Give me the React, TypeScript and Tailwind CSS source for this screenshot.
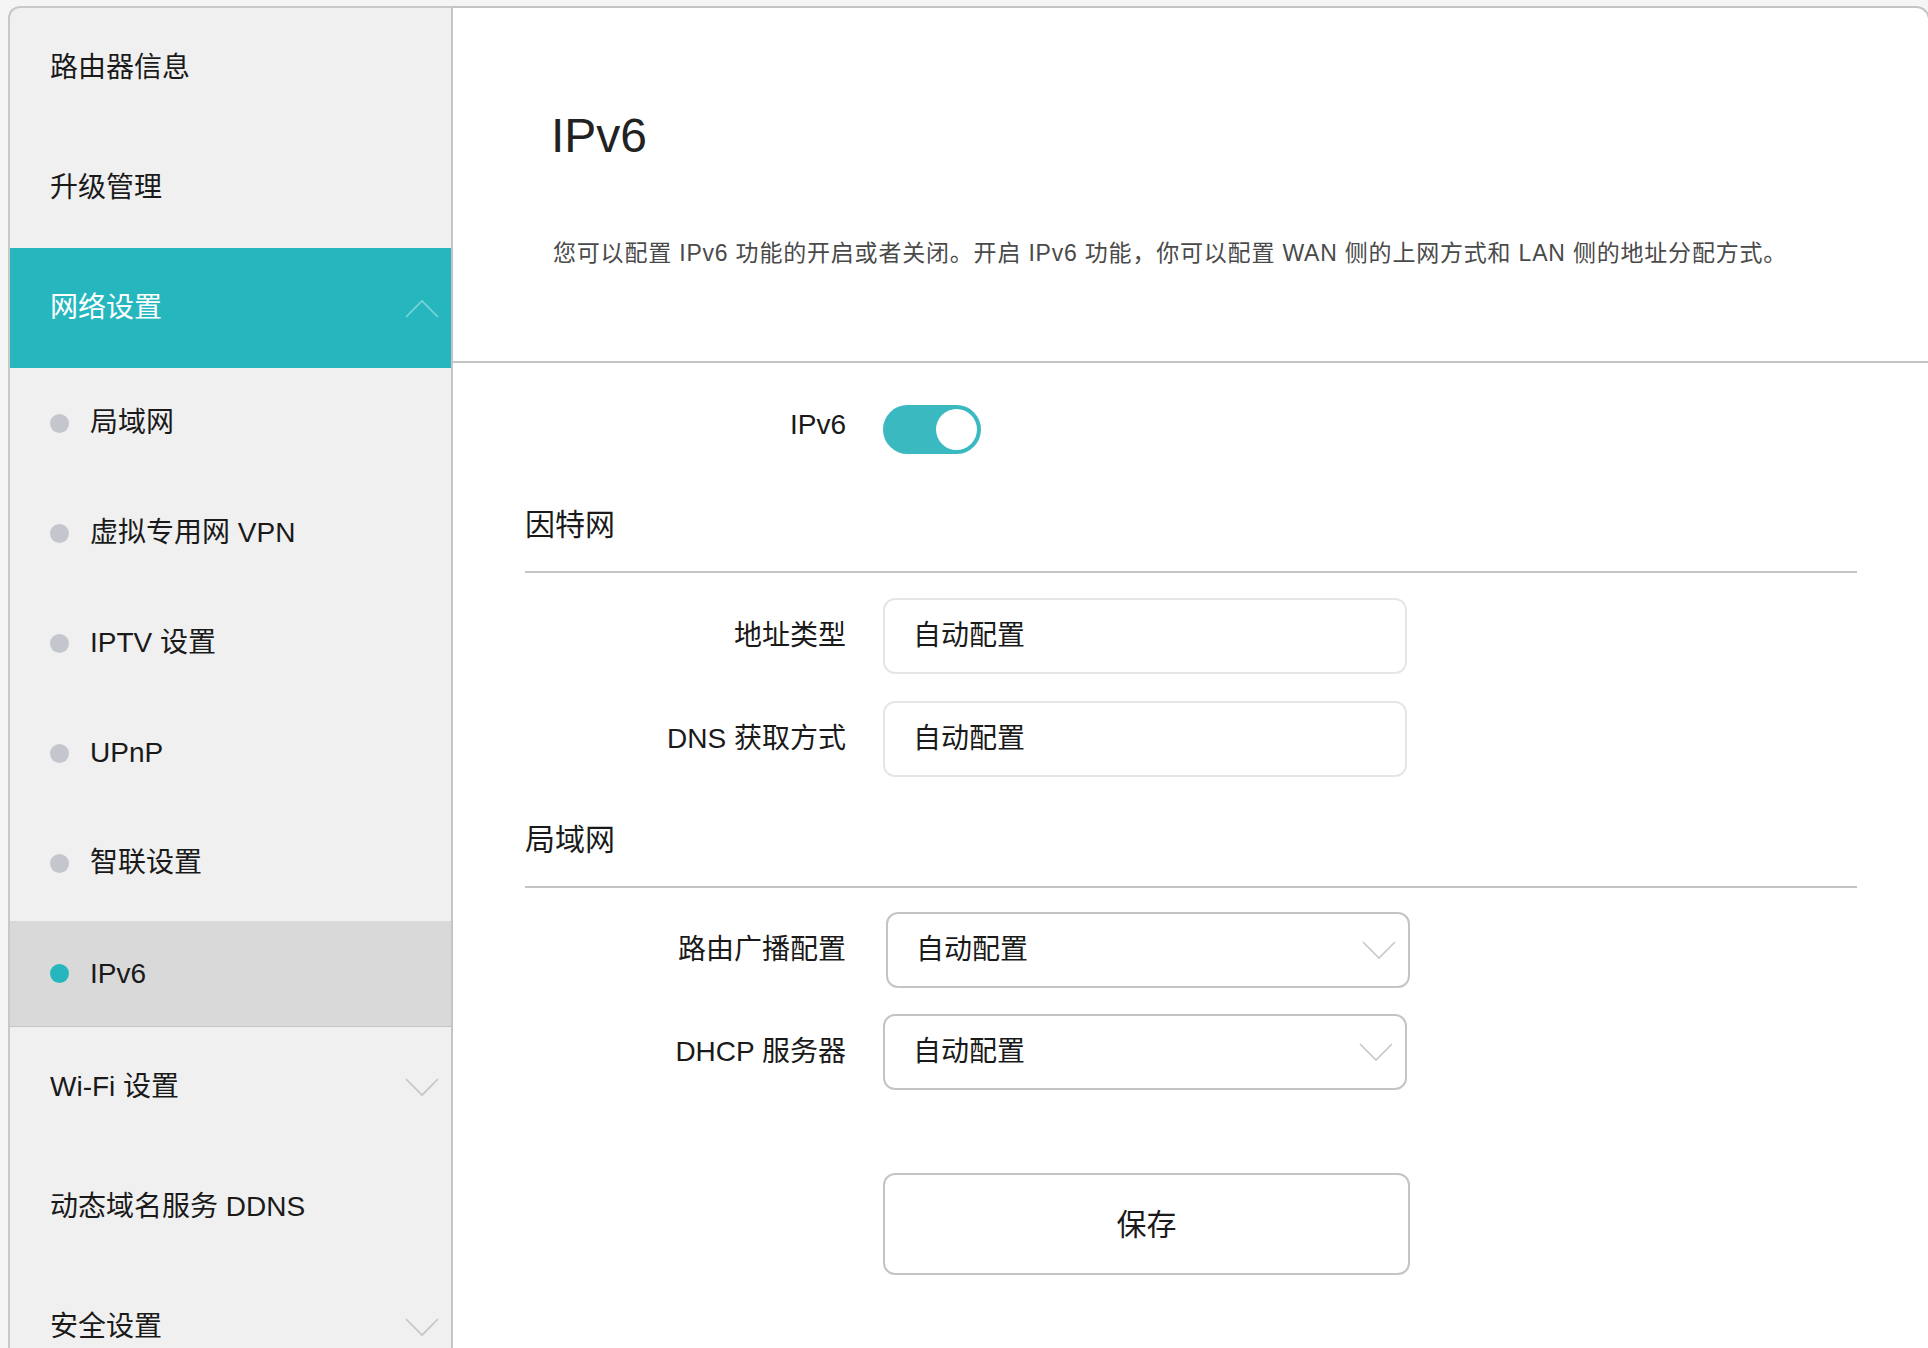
const topItems = ["路由器信息", "升级管理"];
const subItems = ["局域网", "虚拟专用网 VPN", "IPTV 设置", "UPnP", "智联设置", "IPv6"];

function Chevron({ up = false, className = "" }: { up?: boolean; className?: string }) {
  return (
    <svg width="34" height="19" viewBox="0 0 34 19" className={className} fill="none">
      <polyline
        points={up ? "1,18 17,2 33,18" : "1,1 17,17 33,1"}
        stroke="currentColor"
        strokeWidth="1.6"
      />
    </svg>
  );
}

function Sidebar() {
  return (
    <aside className="w-[443px] shrink-0 bg-[#f0f0f0] border-l-2 border-t-2 border-[#c8c8c8] rounded-tl-[12px] overflow-hidden">
      {topItems.map((item) => (
        <div key={item} className="h-[120px] flex items-center pl-[40px] text-[28px] text-[#1a1a1a]">
          {item}
        </div>
      ))}

      {/* 网络设置 */}
      <div className="h-[120px] flex items-center justify-between pl-[40px] pr-[12px] bg-[#26b7be] text-white text-[28px]">
        <span>网络设置</span>
        <Chevron up className="text-white/40" />
      </div>

      {subItems.map((item) => {
        const active = item === "IPv6";
        return (
          <div
            key={item}
            className={
              active
                ? "h-[106px] mt-[3px] flex items-center pl-[40px] bg-[#d9d9d9] border-b border-[#c4c4c4] text-[28px] text-[#1a1a1a]"
                : "h-[110px] flex items-center pl-[40px] text-[28px] text-[#1a1a1a]"
            }
          >
            <span
              className={
                active
                  ? "w-[19px] h-[19px] rounded-full bg-[#26b7be]"
                  : "w-[19px] h-[19px] rounded-full bg-[#c3c6cc]"
              }
            />
            <span className="ml-[21px]">{item}</span>
          </div>
        );
      })}

      <div className="h-[120px] flex items-center justify-between pl-[40px] pr-[12px] text-[28px] text-[#1a1a1a]">
        <span>Wi-Fi 设置</span>
        <Chevron className="text-[#c4c4c4]" />
      </div>
      <div className="h-[120px] flex items-center pl-[40px] text-[28px] text-[#1a1a1a]">
        动态域名服务 DDNS
      </div>
      <div className="h-[120px] flex items-center justify-between pl-[40px] pr-[12px] text-[28px] text-[#1a1a1a]">
        <span>安全设置</span>
        <Chevron className="text-[#c4c4c4]" />
      </div>
    </aside>
  );
}

function Row({
  label,
  children,
  className = "",
  labelClass = "",
}: {
  label: string;
  children: React.ReactNode;
  className?: string;
  labelClass?: string;
}) {
  return (
    <div className={`flex items-center ${className}`}>
      <div className={`w-[321px] text-right text-[28px] text-[#1a1a1a] ${labelClass}`}>{label}</div>
      <div className="ml-[37px]">{children}</div>
    </div>
  );
}

function Field({ value }: { value: string }) {
  return (
    <div className="w-[524px] h-[76px] flex items-center pl-[28px] border-2 border-[#e6e6e6] rounded-[12px] text-[28px] text-[#1a1a1a]">
      {value}
    </div>
  );
}

function SelectBox({ value, className = "" }: { value: string; className?: string }) {
  return (
    <div className={`w-[524px] h-[76px] flex items-center justify-between pl-[28px] pr-[12px] border-2 border-[#c4c4c4] rounded-[12px] text-[28px] text-[#1a1a1a] ${className}`}>
      <span>{value}</span>
      <Chevron className="text-[#c8c8c8]" />
    </div>
  );
}

export default function App() {
  return (
    <div className="h-[1348px] overflow-hidden bg-[#f5f5f5] pt-[6px] pl-[8px] flex font-['Liberation_Sans','Noto_Sans_CJK_SC',sans-serif]">
      <Sidebar />

      <main className="flex-1 -mr-[2px] bg-white border-t-2 border-l-2 border-r-2 border-[#c4c4c4] rounded-tr-[14px]">
        {/* HEADER */}
        <header className="h-[355px] border-b-2 border-[#c4c4c4] pl-[100px]">
          <h1 className="pt-[104px] -ml-[2px] text-[48px] leading-[48px] text-[#222]">IPv6</h1>
          <p className="mt-[77px] text-[23px] leading-[33px] tracking-[0.8px] text-[#4a4a4a]">
            您可以配置 IPv6 功能的开启或者关闭。开启 IPv6 功能，你可以配置 WAN 侧的上网方式和 LAN 侧的地址分配方式。
          </p>
        </header>

        {/* FORM */}
        <div className="pl-[72px] pr-[71px]">
          <Row label="IPv6" className="mt-[41px]" labelClass="pb-[8px]">
            <div className="w-[98px] h-[49px] rounded-full bg-[#3bb9c0] flex items-center justify-end pr-[4px]">
              <div className="w-[41px] h-[41px] rounded-full bg-white" />
            </div>
          </Row>

          <h2 className="mt-[51px] pb-[26px] border-b-2 border-[#c4c4c4] text-[30px] leading-[40px] text-[#1a1a1a]">
            因特网
          </h2>
          <Row label="地址类型" className="mt-[25px]">
            <Field value="自动配置" />
          </Row>
          <Row label="DNS 获取方式" className="mt-[27px]">
            <Field value="自动配置" />
          </Row>

          <h2 className="mt-[43px] pb-[26px] border-b-2 border-[#c4c4c4] text-[30px] leading-[40px] text-[#1a1a1a]">
            局域网
          </h2>
          <Row label="路由广播配置" className="mt-[24px]">
            <SelectBox value="自动配置" className="ml-[3px]" />
          </Row>
          <Row label="DHCP 服务器" className="mt-[26px]">
            <SelectBox value="自动配置" />
          </Row>

          <div className="mt-[83px] ml-[358px]">
            <button className="w-[527px] h-[102px] border-2 border-[#c4c4c4] rounded-[12px] bg-white text-[30px] text-[#1a1a1a]">
              保存
            </button>
          </div>
        </div>
      </main>
    </div>
  );
}
